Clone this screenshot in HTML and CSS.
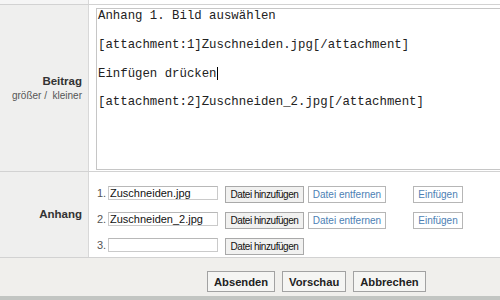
FILE: index.html
```html
<!DOCTYPE html>
<html lang="de">
<head>
  <meta charset="UTF-8">
  <title>Beitrag schreiben</title>
  <link rel="stylesheet" href="styles.css">
</head>
<body>

  <div class="form">
    <div class="row top">
      <div class="label"></div>
      <div class="field"></div>
    </div>

    <div class="row post">
      <div class="label">
        <b>Beitrag</b>
        <div class="size"><a href="#">größer</a> / &nbsp;<a href="#">kleiner</a></div>
      </div>
      <div class="field">
        <div class="editor">Anhang 1. Bild auswählen

[attachment:1]Zuschneiden.jpg[/attachment]

Einfügen drücken<span class="caret"></span>

[attachment:2]Zuschneiden_2.jpg[/attachment]</div>
      </div>
    </div>

    <div class="row attach">
      <div class="label"><b>Anhang</b></div>
      <div class="field files">
        <div class="file">
          <span class="num">1.</span>
          <input type="text" value="Zuschneiden.jpg">
          <button class="add">Datei hinzufügen</button>
          <button class="link remove">Datei entfernen</button>
          <button class="link insert">Einfügen</button>
        </div>
        <div class="file">
          <span class="num">2.</span>
          <input type="text" value="Zuschneiden_2.jpg">
          <button class="add">Datei hinzufügen</button>
          <button class="link remove">Datei entfernen</button>
          <button class="link insert">Einfügen</button>
        </div>
        <div class="file">
          <span class="num">3.</span>
          <input type="text" value="">
          <button class="add">Datei hinzufügen</button>
        </div>
      </div>
    </div>

    <div class="actions">
      <button class="submit">Absenden</button>
      <button class="submit">Vorschau</button>
      <button class="submit">Abbrechen</button>
    </div>
    <div class="bottom"></div>
  </div>

</body>
</html>
```

FILE: styles.css
```css
* {
  box-sizing: border-box;
}
html, body {
  margin: 0;
  height: 300px;
  overflow: hidden;
}
body {
  font-family: 'Liberation Sans', Arial, sans-serif;
  background: #ffffff;
  color: #333;
}
.form {
  width: 500px;
}
.row {
  display: flex;
  border-bottom: 1px solid #d2d2d2;
}
.label {
  width: 89px;
  flex: none;
  background: #efefee;
  border-right: 1px solid #d8d8d8;
  display: flex;
  flex-direction: column;
  justify-content: center;
  align-items: flex-end;
  padding-right: 6px;
  text-align: right;
}
.label b {
  font-size: 11.5px;
  color: #333;
  line-height: 15px;
}
.field {
  flex: 1;
  min-width: 0;
}
.top {
  height: 5px;
}
.top .label {
  background: #f5f5f5;
}
.post {
  height: 167px;
}
.post .field {
  padding: 3px 0 0 7px;
}
.size {
  font-size: 10px;
  line-height: 14px;
  color: #555;
  white-space: nowrap;
}
.size a {
  color: #555;
  text-decoration: none;
}
.editor {
  width: 100%;
  height: 162px;
  border: 1px solid #c6c6c6;
  border-right: none;
  padding: 0 0 0 1px;
  font-family: 'Liberation Mono', 'Courier New', monospace;
  font-size: 12.35px;
  line-height: 14.4px;
  color: #222;
  white-space: pre;
  overflow: hidden;
}
.caret {
  display: inline-block;
  width: 1px;
  height: 13px;
  background: #000;
  vertical-align: -3px;
}
.attach {
  height: 86px;
}
.files {
  padding: 14px 0 0 8px;
  display: flex;
  flex-direction: column;
  gap: 9px;
}
.file {
  display: flex;
  align-items: flex-start;
  height: 17px;
}
.num {
  width: 11px;
  font-size: 11px;
  line-height: 15px;
  color: #555;
}
.file input {
  width: 110px;
  height: 14px;
  margin: 0;
  padding: 0 1px;
  border: 1px solid #cacaca;
  border-top-color: #b8b8b8;
  font-family: 'Liberation Sans', Arial, sans-serif;
  font-size: 11px;
  color: #111;
}
.file button {
  height: 17px;
  margin: 0;
  padding: 0;
  font-family: 'Liberation Sans', Arial, sans-serif;
  font-size: 10px;
  text-align: center;
}
.add {
  width: 79px;
  margin-left: 7px !important;
  background: #f1f1f0;
  border: 1px solid #a9a9a9;
  color: #111;
  letter-spacing: -0.45px;
}
.link {
  background: #fff;
  border: 1px solid #b6b6b6;
  color: #4d7fb4;
}
.remove {
  width: 78px;
  margin-left: 4px !important;
}
.insert {
  width: 50px;
  margin-left: 27px !important;
}
.actions {
  height: 38px;
  background: #f0efec;
  display: flex;
  gap: 7px;
  padding: 13px 0 0 207px;
}
.submit {
  height: 21px;
  margin: 0;
  padding: 0 6px;
  background: #f5f5f3;
  border: 1px solid #a2a2a2;
  font-family: 'Liberation Sans', Arial, sans-serif;
  font-size: 11.2px;
  font-weight: bold;
  color: #222;
}
.bottom {
  height: 4px;
  background: #c2c5c2;
}
```
